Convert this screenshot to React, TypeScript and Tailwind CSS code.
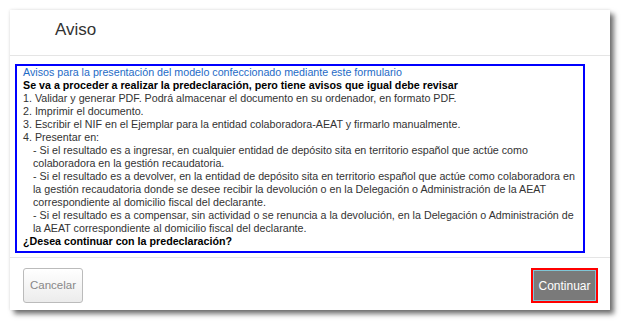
export default function App() {
  return (
    <div className="min-h-[321px] w-[621px] bg-white pl-[10px] pt-[10px] font-['Liberation_Sans',Arial,sans-serif]">
      <div className="flex h-[300px] w-[600px] flex-col bg-white shadow-[0_0_3px_rgba(0,0,0,0.12),4px_4px_5px_rgba(0,0,0,0.55)]">
        <div className="h-[46px] border-b border-[#e5e5e5] pl-[45px] pt-[10px]">
          <h4 className="text-[17px] leading-[20px] text-[#333]">Aviso</h4>
        </div>

        <div className="pb-[4px] pl-[5px] pt-[8px]">
          <div className="w-[570px] border-2 border-[#0000ff] pb-[3px] pl-[6px] pt-0 text-[10.7px] leading-[13px] text-[#333]">
            <div className="text-[#1e6bc6]">
              Avisos para la presentación del modelo confeccionado mediante este formulario
            </div>
            <div className="font-bold text-black">
              Se va a proceder a realizar la predeclaración, pero tiene avisos que igual debe revisar
            </div>
            <div>1. Validar y generar PDF. Podrá almacenar el documento en su ordenador, en formato PDF.</div>
            <div>2. Imprimir el documento.</div>
            <div>3. Escribir el NIF en el Ejemplar para la entidad colaboradora-AEAT y firmarlo manualmente.</div>
            <div>4. Presentar en:</div>
            <div className="pl-[10px]">
              <div>
                - Si el resultado es a ingresar, en cualquier entidad de depósito sita en territorio español que actúe como
                <br />
                colaboradora en la gestión recaudatoria.
              </div>
              <div>
                - Si el resultado es a devolver, en la entidad de depósito sita en territorio español que actúe como colaboradora en
                <br />
                la gestión recaudatoria donde se desee recibir la devolución o en la Delegación o Administración de la AEAT
                <br />
                correspondiente al domicilio fiscal del declarante.
              </div>
              <div>
                - Si el resultado es a compensar, sin actividad o se renuncia a la devolución, en la Delegación o Administración de
                <br />
                la AEAT correspondiente al domicilio fiscal del declarante.
              </div>
            </div>
            <div className="font-bold text-black">¿Desea continuar con la predeclaración?</div>
          </div>
        </div>

        <div className="flex flex-1 items-start justify-between border-t border-[#e5e5e5] pl-[13px] pr-[12px] pt-[10px]">
          <button className="h-[35px] w-[60px] rounded-[3px] border border-[#bbb] bg-gradient-to-b from-white to-[#ececec] text-[11.5px] text-[#888]">
            Cancelar
          </button>
          <button className="h-[35px] w-[67px] border-2 border-[#ff0000] bg-[#7a7a7a] text-[12px] text-white shadow-[inset_0_0_0_1px_#7fc6d8]">
            Continuar
          </button>
        </div>
      </div>
    </div>
  );
}
